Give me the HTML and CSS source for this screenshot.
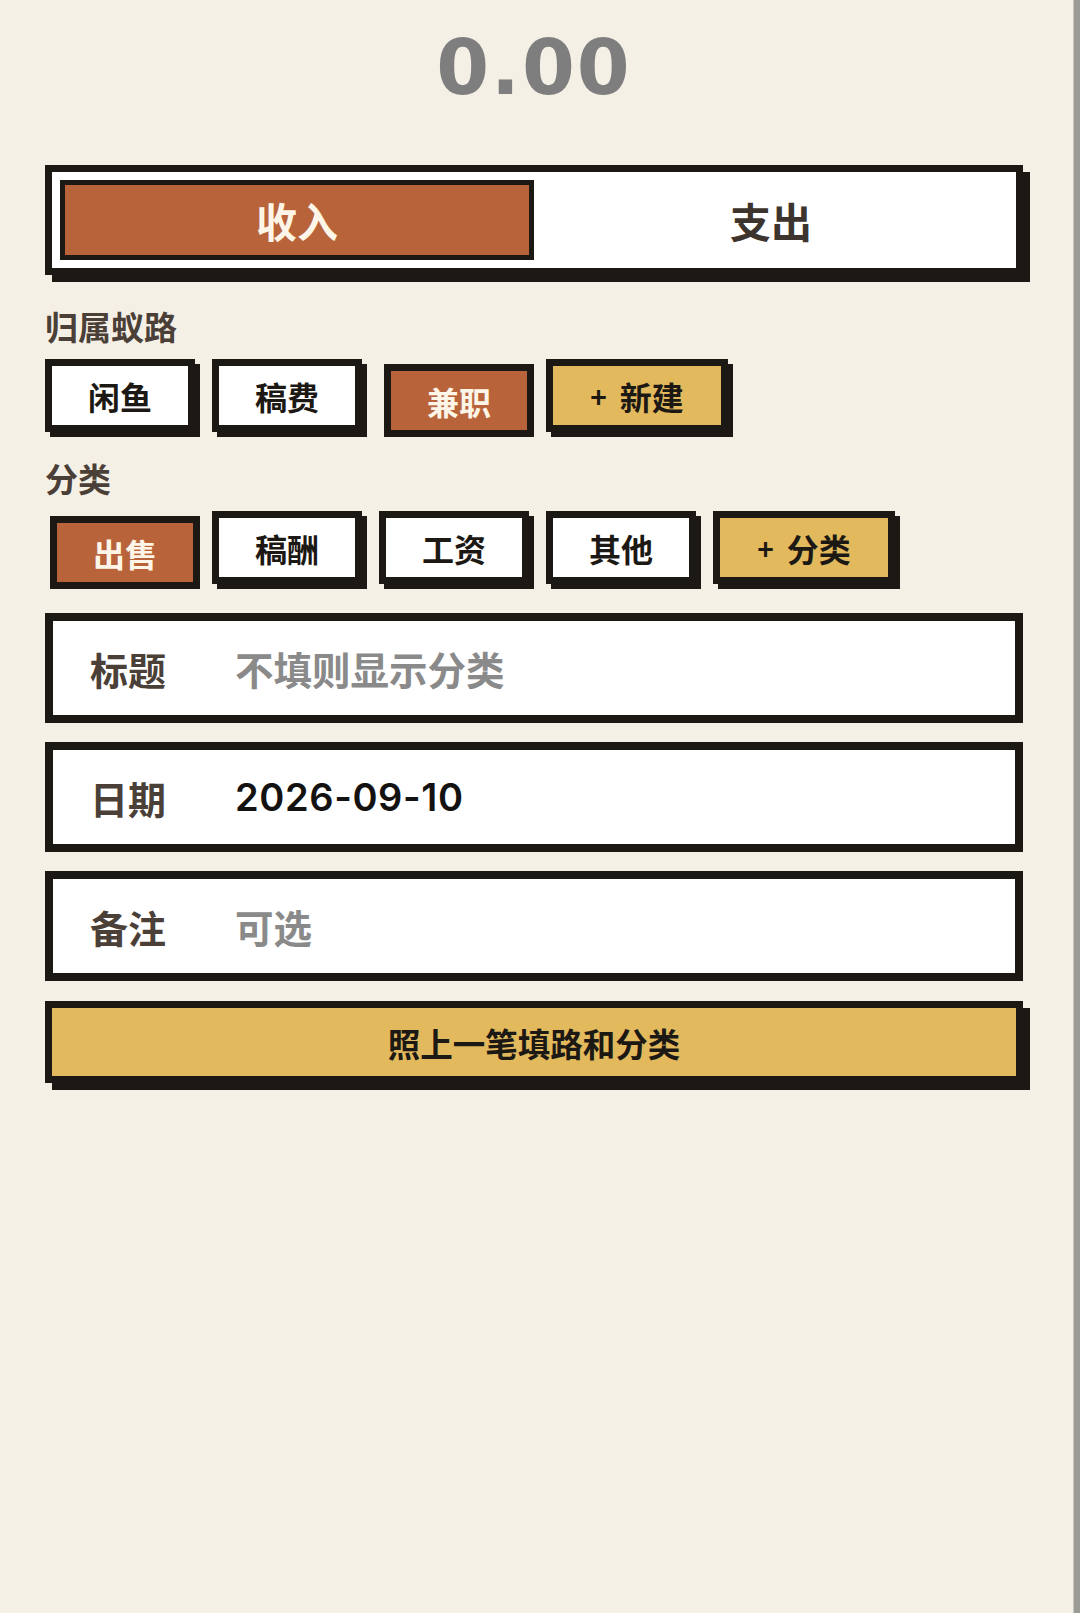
FILE: index.html
```html
<!DOCTYPE html>
<html lang="zh-CN">
<head>
<meta charset="utf-8">
<title>记一笔</title>
<link rel="stylesheet" href="styles.css">
</head>
<body>
<main class="page">
  <div class="amount">0.00</div>

  <div class="toggle">
    <button class="seg seg-active">收入</button>
    <button class="seg">支出</button>
  </div>

  <div class="section-label label-route">归属蚁路</div>
  <div class="chips">
    <button class="chip">闲鱼</button>
    <button class="chip">稿费</button>
    <button class="chip chip-active">兼职</button>
    <button class="chip chip-add"><span class="plus">+</span>新建</button>
  </div>

  <div class="section-label label-cat">分类</div>
  <div class="chips">
    <button class="chip chip-active">出售</button>
    <button class="chip">稿酬</button>
    <button class="chip">工资</button>
    <button class="chip">其他</button>
    <button class="chip chip-add"><span class="plus">+</span>分类</button>
  </div>

  <div class="field field-first">
    <span class="field-label">标题</span>
    <span class="field-value placeholder">不填则显示分类</span>
  </div>
  <div class="field">
    <span class="field-label">日期</span>
    <span class="field-value date">2026-09-10</span>
  </div>
  <div class="field">
    <span class="field-label">备注</span>
    <span class="field-value placeholder">可选</span>
  </div>

  <button class="copy-btn">照上一笔填路和分类</button>
</main>
<div class="scrollbar"></div>
</body>
</html>
```

FILE: styles.css
```css
html, body {
  height: 100%;
}

body {
  margin: 0;
  background: #f5f0e6;
  display: flex;
  font-family: "Noto Sans CJK SC", "Noto Sans", sans-serif;
  color: #1c1814;
}

.page {
  flex: 1;
  padding: 28px 50px 0 45px;
  display: flex;
  flex-direction: column;
}

.scrollbar {
  width: 6px;
  flex: none;
  background: #9c9c96;
  border-left: 1px solid #c9c7bf;
}

button {
  font-family: inherit;
  cursor: pointer;
  margin: 0;
}

.amount {
  text-align: center;
  font-family: "DejaVu Sans", sans-serif;
  font-weight: 700;
  font-size: 76px;
  line-height: 80px;
  letter-spacing: 2px;
  color: #7e7e7e;
}

.toggle {
  margin-top: 57px;
  height: 110px;
  box-sizing: border-box;
  border: 7px solid #1c1814;
  background: #ffffff;
  padding: 8px;
  display: grid;
  grid-template-columns: 1fr 1fr;
  box-shadow: 7px 7px 0 #1c1814;
}

.seg {
  border: 5px solid transparent;
  background: transparent;
  font-size: 41px;
  font-weight: 700;
  color: #3d342d;
  display: flex;
  align-items: center;
  justify-content: center;
  padding: 0;
}

.seg-active {
  background: #b9633a;
  border-color: #1c1814;
  color: #fdf6e8;
}

.section-label {
  font-size: 33px;
  line-height: 36px;
  font-weight: 700;
  color: #4b4037;
  margin-bottom: 15px;
}

.label-route {
  margin-top: 33px;
}

.label-cat {
  margin-top: 28px;
}

.chips {
  display: flex;
  gap: 17px;
}

.chip {
  width: 150px;
  height: 73px;
  box-sizing: border-box;
  border: 7px solid #1c1814;
  background: #ffffff;
  box-shadow: 5px 5px 0 #1c1814;
  font-size: 32px;
  font-weight: 700;
  color: #1c1814;
  display: flex;
  align-items: center;
  justify-content: center;
  padding: 0;
}

.chip-active {
  background: #b9633a;
  color: #fdf6e8;
  box-shadow: none;
  transform: translate(5px, 5px);
}

.chip-add {
  width: 182px;
  background: #e2b95d;
}

.plus {
  font-size: 28px;
  margin-right: 13px;
}

.field {
  margin-top: 19px;
  height: 110px;
  box-sizing: border-box;
  border: 8px solid #1c1814;
  background: #ffffff;
  display: flex;
  align-items: center;
  padding-left: 37px;
}

.field-first {
  margin-top: 29px;
}

.field-label {
  width: 145px;
  flex: none;
  font-size: 38px;
  font-weight: 700;
  color: #4b4037;
}

.field-value {
  font-size: 38.5px;
  font-weight: 700;
}

.placeholder {
  color: #8a8a8a;
}

.date {
  font-family: Inter, "Noto Sans", sans-serif;
  font-weight: 600;
  font-size: 38px;
  letter-spacing: 0.6px;
  color: #141210;
}

.copy-btn {
  margin-top: 20px;
  height: 82px;
  box-sizing: border-box;
  border: 7px solid #1c1814;
  background: #e2b95d;
  box-shadow: 7px 7px 0 #1c1814;
  font-size: 32.5px;
  font-weight: 700;
  color: #1c1814;
  padding: 0;
}
```
